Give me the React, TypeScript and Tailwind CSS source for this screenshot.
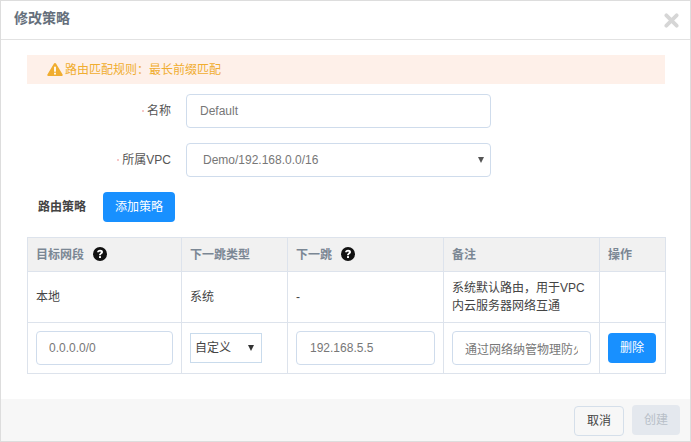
const font = { fontFamily: '"Liberation Sans", "Noto Sans CJK SC", sans-serif' };

function HelpIcon() {
  return (
    <svg viewBox="0 0 16 16" className="w-[14px] h-[14px] shrink-0 -mt-[1px]">
      <circle cx="8" cy="8" r="8" fill="#111" />
      <path d="M4.7 6c0-1.9 1.4-3 3.4-3s3.3 1 3.3 2.6c0 1.2-.7 1.8-1.5 2.4-.6.4-.8.7-.8 1.4H6.9c0-1.2.4-1.8 1.2-2.4.6-.4.9-.7.9-1.2 0-.5-.4-.8-1-.8-.7 0-1 .4-1.1 1z" fill="#fff" />
      <rect x="6.9" y="10.4" width="2.2" height="2.2" fill="#fff" />
    </svg>
  );
}

function WarnIcon() {
  return (
    <svg viewBox="0 0 16 14" className="w-[16px] h-[15px] shrink-0">
      <path d="M8 .5c.5 0 .8.2 1 .6l6.6 11c.4.7 0 1.4-.8 1.4H1.2c-.8 0-1.2-.7-.8-1.4l6.6-11c.2-.4.5-.6 1-.6z" fill="#f0ad30" />
      <rect x="7.1" y="4.2" width="1.8" height="5" fill="#fff" />
      <rect x="7.1" y="10.2" width="1.8" height="1.8" fill="#fff" />
    </svg>
  );
}

const thClass = 'border border-[#dde3ec] px-2 text-left text-[12px] font-bold text-[#7b8794]';
const tdClass = 'border border-[#dde3ec] px-2 text-[12px] text-[#444] font-normal';
const inputClass = 'w-full h-[34px] rounded border border-[#cfdcec] bg-white text-[12px] text-[#777] outline-none';

function FieldLabel({ text }: { text: string }) {
  return (
    <label className="w-[144px] shrink-0 flex items-center justify-end gap-[3px] text-[12px] text-[#555]">
      <span className="w-[2px] h-[2px] rounded-full bg-[#f5b5b5]" />
      {text}
    </label>
  );
}

export default function App() {
  return (
    <div style={font} className="w-[691px] h-[442px] flex flex-col bg-white border border-[#dddddd] overflow-hidden">
      <div className="h-[39px] shrink-0 flex items-center justify-between border-b border-[#e2e2e2] pl-[13px] pr-[11px] pb-[4px]">
        <span className="text-[14px] font-bold text-[#66707c]">修改策略</span>
        <svg viewBox="0 0 16 16" className="w-[15px] h-[15px] mt-[5px]">
          <path d="M2.5 2.5 L13.5 13.5 M13.5 2.5 L2.5 13.5" stroke="#d6d6d6" strokeWidth="4" strokeLinecap="round" />
        </svg>
      </div>

      <div className="flex-1 flex flex-col pl-[26px] pr-[25px] pt-[15px]">
        <div className="h-[29px] shrink-0 flex items-center gap-[2px] bg-[#fef0e9] pl-[20px] text-[12px] text-[#f0ad30]">
          <WarnIcon />
          <span>路由匹配规则：最长前缀匹配</span>
        </div>

        <div className="mt-[10px] flex items-center h-[34px]">
          <FieldLabel text="名称" />
          <div className="ml-[15px] w-[305px]">
            <input readOnly value="Default" className={`${inputClass} pl-[13px]`} />
          </div>
        </div>

        <div className="mt-[15px] flex items-center h-[34px]">
          <FieldLabel text="所属VPC" />
          <div className="ml-[15px] w-[305px] h-[34px] rounded border border-[#cfdcec] flex items-center justify-between pl-[16px] pr-[6px] text-[12px] text-[#777]">
            <span>Demo/192.168.0.0/16</span>
            <span className="w-0 h-0 border-x-[3px] border-x-transparent border-t-[6px] border-t-[#555]" />
          </div>
        </div>

        <div className="mt-[15px] flex items-center h-[30px]">
          <span className="ml-[11px] w-[65px] shrink-0 text-[12px] font-bold text-[#444]">路由策略</span>
          <button className="w-[72px] h-[30px] rounded bg-[#1890ff] text-[12px] text-white">添加策略</button>
        </div>

        <table className="mt-[15px] w-[638px] table-fixed border-collapse">
          <colgroup>
            <col className="w-[154px]" />
            <col className="w-[106px]" />
            <col className="w-[156px]" />
            <col className="w-[156px]" />
            <col className="w-[66px]" />
          </colgroup>
          <thead>
            <tr className="h-[34px] bg-[#f1f1f1]">
              <th className={thClass}>
                <span className="flex items-center gap-[9px]">目标网段<HelpIcon /></span>
              </th>
              <th className={thClass}>下一跳类型</th>
              <th className={thClass}>
                <span className="flex items-center gap-[9px]">下一跳<HelpIcon /></span>
              </th>
              <th className={thClass}>备注</th>
              <th className={thClass}>操作</th>
            </tr>
          </thead>
          <tbody>
            <tr className="h-[51px]">
              <td className={tdClass}>本地</td>
              <td className={tdClass}>系统</td>
              <td className={tdClass}>-</td>
              <td className={`${tdClass} leading-[18px]`}>系统默认路由，用于VPC内云服务器网络互通</td>
              <td className={tdClass}></td>
            </tr>
            <tr className="h-[51px]">
              <td className={tdClass}>
                <input readOnly value="0.0.0.0/0" className={`${inputClass} pl-[12px]`} />
              </td>
              <td className={tdClass}>
                <div className="w-[72px] h-[30px] border border-[#c9dbec] flex items-center justify-between pl-[4px] pr-[7px] text-[12px] text-[#444]">
                  <span>自定义</span>
                  <span className="w-0 h-0 border-x-[3px] border-x-transparent border-t-[6px] border-t-[#333]" />
                </div>
              </td>
              <td className={tdClass}>
                <input readOnly value="192.168.5.5" className={`${inputClass} pl-[13px]`} />
              </td>
              <td className={tdClass}>
                <input readOnly value="通过网络纳管物理防火墙" className={`${inputClass} pl-[12px] pr-[12px]`} />
              </td>
              <td className={tdClass}>
                <button className="w-[48px] h-[30px] rounded bg-[#1890ff] text-[12px] text-white">删除</button>
              </td>
            </tr>
          </tbody>
        </table>
      </div>

      <div className="h-[42px] shrink-0 flex items-center justify-end gap-[8px] bg-[#f7f7f7] pr-[10px]">
        <button className="w-[50px] h-[30px] mt-[1px] rounded border border-[#d5dfea] bg-[#f7f7f7] text-[12px] text-[#444]">取消</button>
        <button className="w-[48px] h-[30px] mb-[1px] rounded bg-[#e4e8ee] text-[12px] text-[#b8bfc8]">创建</button>
      </div>
    </div>
  );
}
